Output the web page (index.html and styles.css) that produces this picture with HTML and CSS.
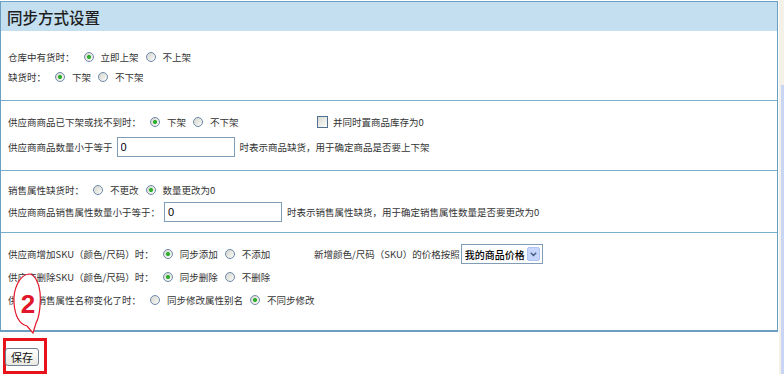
FILE: index.html
```html
<!DOCTYPE html>
<html lang="zh-CN">
<head>
<meta charset="UTF-8">
<title>同步方式设置</title>
<link rel="stylesheet" href="styles.css">
</head>
<body>
<div class="page">
    <div class="main">
        <div class="panel">
            <div class="panel-head">同步方式设置</div>

            <!-- stock -->
            <div class="section s1">
                <div class="row">
                    <span class="label">仓库中有货时：</span>
                    <label class="opt"><input type="radio" name="instock" checked><span>立即上架</span></label>
                    <label class="opt"><input type="radio" name="instock"><span>不上架</span></label>
                </div>
                <div class="row">
                    <span class="label">缺货时：</span>
                    <label class="opt"><input type="radio" name="nostock" checked><span>下架</span></label>
                    <label class="opt"><input type="radio" name="nostock"><span>不下架</span></label>
                </div>
            </div>

            <!-- supplier goods -->
            <div class="section s2">
                <div class="row">
                    <div class="col-main">
                        <span class="label">供应商商品已下架或找不到时：</span>
                        <label class="opt"><input type="radio" name="offshelf" checked><span>下架</span></label>
                        <label class="opt"><input type="radio" name="offshelf"><span>不下架</span></label>
                    </div>
                    <label class="opt"><input type="checkbox" class="chk"><span>并同时置商品库存为0</span></label>
                </div>
                <div class="row row-input">
                    <span>供应商商品数量小于等于</span>
                    <input type="text" class="num" value="0">
                    <span>时表示商品缺货，用于确定商品是否要上下架</span>
                </div>
            </div>

            <!-- sale attributes -->
            <div class="section s3">
                <div class="row">
                    <span class="label">销售属性缺货时：</span>
                    <label class="opt"><input type="radio" name="attr"><span>不更改</span></label>
                    <label class="opt"><input type="radio" name="attr" checked><span>数量更改为0</span></label>
                </div>
                <div class="row">
                    <span>供应商商品销售属性数量小于等于：</span>
                    <input type="text" class="num" value="0">
                    <span>时表示销售属性缺货，用于确定销售属性数量是否要更改为0</span>
                </div>
            </div>

            <!-- sku -->
            <div class="section s4">
                <div class="row">
                    <div class="col-main">
                        <span class="label">供应商增加SKU（颜色/尺码）时：</span>
                        <label class="opt"><input type="radio" name="skuadd" checked><span>同步添加</span></label>
                        <label class="opt"><input type="radio" name="skuadd"><span>不添加</span></label>
                    </div>
                    <span>新增颜色/尺码（SKU）的价格按照</span>
                    <span class="select">
                        <select>
                            <option>我的商品价格</option>
                            <option>供应商价格</option>
                        </select>
                        <span class="select-arrow">
                            <svg width="7" height="5" viewBox="0 0 7 5"><path d="M0.8 0.8 L3.5 3.6 L6.2 0.8" fill="none" stroke="#4a5f86" stroke-width="1.4"/></svg>
                        </span>
                    </span>
                </div>
                <div class="row">
                    <span class="label">供应商删除SKU（颜色/尺码）时：</span>
                    <label class="opt"><input type="radio" name="skudel" checked><span>同步删除</span></label>
                    <label class="opt"><input type="radio" name="skudel"><span>不删除</span></label>
                </div>
                <div class="row">
                    <span class="label">供应商销售属性名称变化了时：</span>
                    <label class="opt"><input type="radio" name="alias"><span>同步修改属性别名</span></label>
                    <label class="opt"><input type="radio" name="alias" checked><span>不同步修改</span></label>
                </div>
            </div>
        </div>

        <div class="save-box"><button class="btn">保存</button></div>
    </div>

    <div class="edge"><div class="edge-thumb"></div></div>

    <!-- step marker -->
    <svg class="callout" width="34" height="64" viewBox="0 0 34 64">
        <path d="M19 2 C9 3 3 18 4 31 C5 44 9 52 17 54 L23 61 L26 51 C30 44 31 28 30 20 C29 10 24 2 19 2 Z" fill="#fff" stroke="#e2162a" stroke-width="1.2"/>
        <text x="18" y="41" text-anchor="middle" class="callout-num">2</text>
    </svg>
</div>
</body>
</html>
```

FILE: styles.css
```css
body {
    margin: 0;
    font-family: "Noto Sans CJK SC", sans-serif;
    font-size: 9.5px;
    color: #333;
    background: #fff;
}

.page {
    display: flex;
    position: relative;
}

.main {
    width: 779px;
}

.panel {
    width: 778px;
    box-sizing: border-box;
    margin-top: 1px;
    border: 1px solid #6a9fc2;
    border-bottom-width: 2px;
}

.panel-head {
    height: 29px;
    padding-left: 6px;
    display: flex;
    align-items: center;
    background: #c3dff0;
    font-size: 15.5px;
    font-weight: 500;
    color: #1e1e1e;
}

.section {
    padding: 0 7px;
    border-top: 1px solid #7badcd;
}

.s1 {
    border-top: none;
    padding-top: 16px;
    padding-bottom: 13px;
}
.s1 .row { height: 20px; }

.s2 {
    padding-top: 10px;
    padding-bottom: 11px;
}
.s2 .row-input {
    height: 24px;
    margin-top: 2px;
}

.s3 {
    padding-top: 8px;
    padding-bottom: 9px;
}

.s4 {
    padding-top: 10px;
    padding-bottom: 19px;
}
.s4 .row + .row { margin-top: 1px; }

.row {
    display: flex;
    align-items: center;
    height: 22px;
    white-space: nowrap;
}

.col-main {
    width: 306px;
    display: flex;
    align-items: center;
}

.label {
    margin-right: 9px;
}

.opt {
    display: flex;
    align-items: center;
    margin-right: 7px;
}

.opt input {
    margin: 0 7px 0 0;
}

input[type="radio"] {
    appearance: none;
    width: 10px;
    height: 10px;
    box-sizing: border-box;
    border: 1px solid #6d89a9;
    border-radius: 50%;
    background: linear-gradient(135deg, #d6d6ce, #fbfbf8);
}

input[type="radio"]:checked {
    background: radial-gradient(circle, #2fae2f 0 1.6px, transparent 2.4px), linear-gradient(135deg, #d6d6ce, #fbfbf8);
}

.chk {
    appearance: none;
    width: 11px;
    height: 12px;
    box-sizing: border-box;
    border: 1px solid #52708f;
    background: linear-gradient(135deg, #d9d9d3, #fdfdfb);
}

.opt .chk {
    margin: 0 5px 0 3px;
}

.num {
    width: 118px;
    height: 20px;
    box-sizing: border-box;
    margin: 0 5px 0 4px;
    padding: 0 3px;
    border: 1px solid #7f9db9;
    font: 11px "Liberation Sans", sans-serif;
    color: #000;
}

.select {
    display: inline-flex;
    align-items: center;
    width: 82px;
    height: 20px;
    box-sizing: border-box;
    margin-left: 1px;
    border: 1px solid #7f9db9;
    background: #fff;
}

.select select {
    flex: 1;
    min-width: 0;
    appearance: none;
    border: none;
    background: transparent;
    padding: 0 0 0 3px;
    font-family: "Noto Sans CJK SC", sans-serif;
    font-size: 10px;
    font-weight: 500;
    color: #000;
}

.select-arrow {
    width: 13px;
    height: 14px;
    box-sizing: border-box;
    margin-right: 2px;
    display: flex;
    align-items: center;
    justify-content: center;
    background: #c5d5fb;
    border: 1px solid #b1c5f2;
    border-radius: 2px;
}

.save-box {
    width: 44px;
    height: 36px;
    box-sizing: border-box;
    margin: 6px 0 0 3px;
    padding-top: 7px;
    border: 3px solid #e8121b;
}

.btn {
    display: block;
    width: 34px;
    height: 18px;
    margin-left: -1px;
    padding: 0;
    border: 1px solid #6f7f95;
    border-radius: 3px;
    background: linear-gradient(#ffffff, #e9e8e0);
    font-family: "Noto Sans CJK SC", sans-serif;
    font-size: 11px;
    color: #111;
}

.edge {
    width: 5px;
    height: 374px;
    background: #f3f1e8;
    display: flex;
    flex-direction: column;
}

.edge-thumb {
    margin: 85px 0 0 2px;
    flex: 1;
    background: #c9d5f4;
}

.callout {
    position: absolute;
    left: 10px;
    top: 272px;
}

.callout-num {
    font-family: "Liberation Sans", sans-serif;
    font-weight: 700;
    font-size: 26px;
    fill: #e2162a;
}
```
